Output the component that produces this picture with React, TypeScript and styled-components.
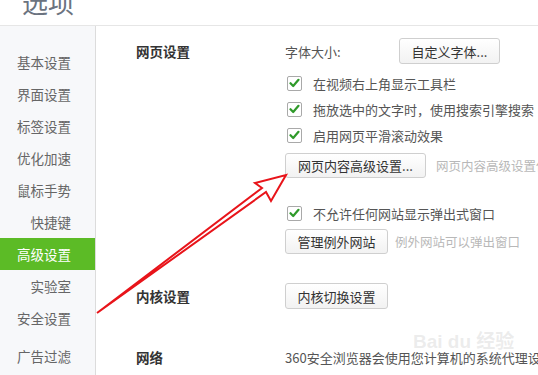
import React from "react";
import styled, { createGlobalStyle } from "styled-components";

const Global = createGlobalStyle`
  html, body { margin: 0; padding: 0; background: #fff; }
  body { font-family: "Microsoft YaHei", "Noto Sans CJK SC", "Noto Sans", sans-serif; overflow: hidden; }
  * { box-sizing: border-box; }
`;

const Page = styled.div`
  position: relative;
  width: 538px;
  height: 375px;
  overflow: hidden;
  display: flex;
  flex-direction: column;
  background: #fff;
`;

const Header = styled.div`
  height: 26px;
  flex: none;
  border-bottom: 1px solid #e6e6e6;
  overflow: hidden;
  padding-left: 22px;
`;

const Title = styled.div`
  font-size: 26px;
  line-height: 26px;
  margin-top: -11px;
  color: #6b7380;
`;

const Body = styled.div`
  flex: 1;
  display: flex;
  min-height: 0;
`;

const Sidebar = styled.nav`
  width: 96px;
  flex: none;
  background: #f7f8fa;
  border-right: 1px solid #dcdcdc;
  padding-top: 20px;
  display: flex;
  flex-direction: column;
`;

const NavItem = styled.div<{ $active?: boolean; $gap?: number }>`
  height: 32px;
  line-height: 32px;
  margin-top: ${(p) => p.$gap ?? 0}px;
  padding-right: 24px;
  text-align: right;
  font-size: 13.5px;
  color: ${(p) => (p.$active ? "#fff" : "#666")};
  background: ${(p) => (p.$active ? "#5cbb26" : "transparent")};
  white-space: nowrap;
`;

const Main = styled.main`
  flex: 1;
  padding: 12px 0 0 40px;
  display: flex;
  flex-direction: column;
  min-width: 0;
`;

const Section = styled.section<{ $gap?: number }>`
  display: flex;
  margin-top: ${(p) => p.$gap ?? 0}px;
`;

const Label = styled.div`
  width: 149px;
  flex: none;
  font-size: 13.5px;
  font-weight: bold;
  color: #333;
  line-height: 26px;
`;

const Content = styled.div`
  flex: 1;
  display: flex;
  flex-direction: column;
  min-width: 0;
  overflow: hidden;
`;

const Row = styled.div<{ $gap?: number; $h?: number }>`
  display: flex;
  align-items: center;
  height: ${(p) => p.$h ?? 26}px;
  margin-top: ${(p) => p.$gap ?? 0}px;
  white-space: nowrap;
`;

const Text = styled.span<{ $w?: number }>`
  font-size: 13px;
  color: #555;
  ${(p) => (p.$w ? `width: ${p.$w}px; flex: none;` : "")}
`;

const Hint = styled.span<{ $gap?: number }>`
  font-size: 12.5px;
  color: #b8b8b8;
  margin-left: ${(p) => p.$gap ?? 10}px;
  white-space: nowrap;
`;

const Button = styled.button<{ $w: number; $h?: number }>`
  width: ${(p) => p.$w}px;
  height: ${(p) => p.$h ?? 25}px;
  flex: none;
  padding: 0;
  border: 1px solid #cfcfcf;
  border-radius: 3px;
  background: linear-gradient(#ffffff, #f2f2f2);
  font-family: inherit;
  font-size: 13px;
  color: #333;
  text-align: center;
`;

const Box = styled.span`
  width: 15px;
  height: 15px;
  flex: none;
  margin: 0 11px 0 2px;
  border: 1px solid #a9a9a9;
  border-radius: 2px;
  background: #fff;
  display: inline-flex;
  align-items: center;
  justify-content: center;
`;

const Overlay = styled.svg`
  position: absolute;
  left: 0;
  top: 0;
  pointer-events: none;
`;

const Watermark = styled.div`
  position: absolute;
  left: 413px;
  top: 326px;
  font-family: "Liberation Sans", "Noto Sans CJK SC", sans-serif;
  font-size: 19px;
  font-weight: bold;
  color: rgba(200, 200, 200, 0.35);
  pointer-events: none;
  white-space: nowrap;
`;

const Check = ({ label }: { label: string }) => (
  <>
    <Box>
      <svg width="11" height="10" viewBox="0 0 11 10">
        <path d="M1.5 5.2 L4.2 8 L9.5 1.8" fill="none" stroke="#2f9a2a" strokeWidth="2.2" strokeLinecap="round" strokeLinejoin="round" />
      </svg>
    </Box>
    <Text>{label}</Text>
  </>
);

const navItems = [
  { t: "基本设置" },
  { t: "界面设置" },
  { t: "标签设置" },
  { t: "优化加速" },
  { t: "鼠标手势" },
  { t: "快捷键" },
  { t: "高级设置", active: true },
  { t: "实验室" },
  { t: "安全设置" },
  { t: "广告过滤", gap: 6 },
];

export default function App() {
  return (
    <Page>
      <Global />
      <Header>
        <Title>选项</Title>
      </Header>
      <Body>
        <Sidebar>
          {navItems.map((n) => (
            <NavItem key={n.t} $active={n.active} $gap={n.gap}>
              {n.t}
            </NavItem>
          ))}
        </Sidebar>
        <Main>
          <Section>
            <Label>网页设置</Label>
            <Content>
              <Row>
                <Text $w={114}>字体大小:</Text>
                <Button $w={101} $h={26}>自定义字体...</Button>
              </Row>
              <Row $gap={6}>
                <Check label="在视频右上角显示工具栏" />
              </Row>
              <Row>
                <Check label="拖放选中的文字时，使用搜索引擎搜索" />
              </Row>
              <Row>
                <Check label="启用网页平滑滚动效果" />
              </Row>
              <Row $gap={5} $h={25}>
                <Button $w={141}>网页内容高级设置...</Button>
                <Hint>网页内容高级设置仅对当前网页生效</Hint>
              </Row>
              <Row $gap={22}>
                <Check label="不允许任何网站显示弹出式窗口" />
              </Row>
              <Row $gap={3} $h={25}>
                <Button $w={103}>管理例外网站</Button>
                <Hint $gap={7}>例外网站可以弹出窗口</Hint>
              </Row>
            </Content>
          </Section>
          <Section $gap={29}>
            <Label>内核设置</Label>
            <Content>
              <Row>
                <Button $w={103} $h={26}>内核切换设置</Button>
              </Row>
            </Content>
          </Section>
          <Section $gap={35}>
            <Label>网络</Label>
            <Content>
              <Row>
                <Text>360安全浏览器会使用您计算机的系统代理设置连接到网络</Text>
              </Row>
            </Content>
          </Section>
        </Main>
      </Body>
      <Watermark>Bai du 经验</Watermark>
      <Overlay width="538" height="375" viewBox="0 0 538 375">
        <path
          d="M97 313 L262 188 L255 183 L286 175 L271 201 L266 192 Z"
          fill="#fff"
          stroke="#e8141a"
          strokeWidth="2"
          strokeLinejoin="miter"
        />
      </Overlay>
    </Page>
  );
}
